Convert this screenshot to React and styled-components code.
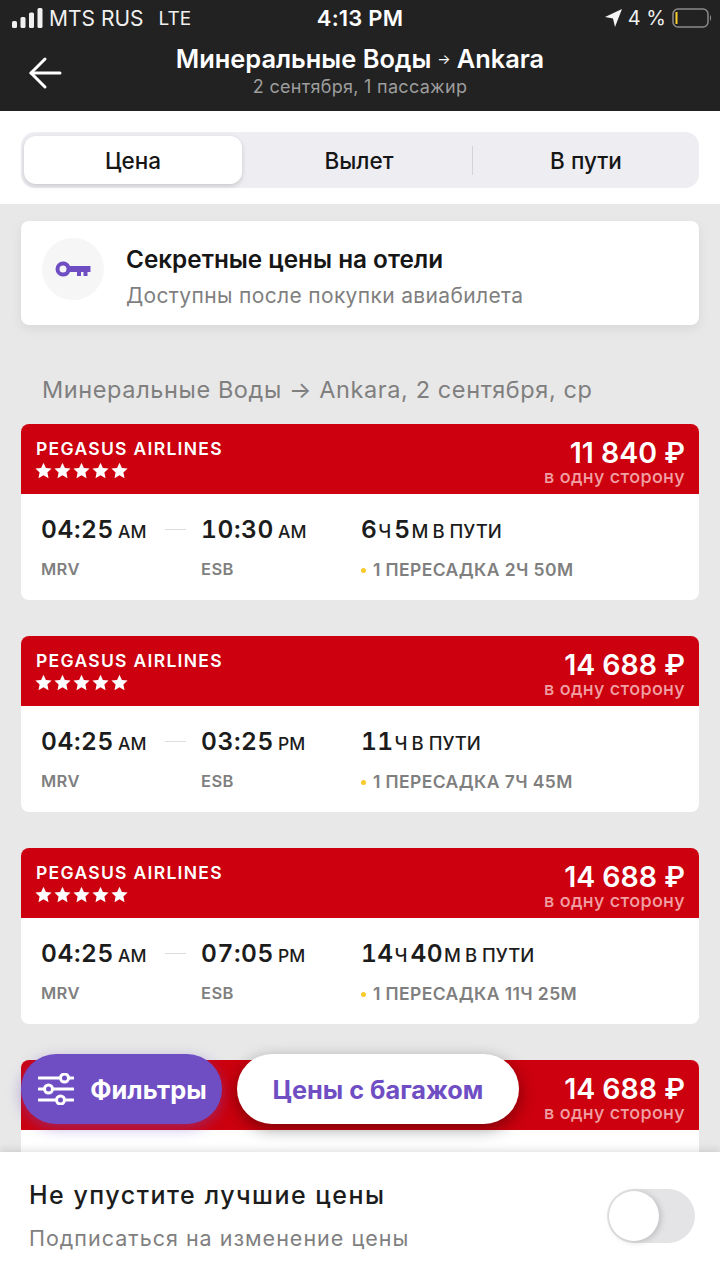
import React from 'react';
import styled, { createGlobalStyle } from 'styled-components';

const Global = createGlobalStyle`
html, body {
  margin: 0;
  padding: 0;
  background: #e8e8e8;
}
* {
  box-sizing: border-box;
}
`;

const Page = styled.div`
position: relative;
width: 720px;
height: 1280px;
overflow: hidden;
background: #e8e8e8;
font-family: Inter, "Noto Sans", sans-serif;
`;

const Top = styled.header`
height: 111px;
background: #222222;
color: #fff;
`;

const StatusBar = styled.div`
display: grid;
grid-template-columns: 1fr auto 1fr;
align-items: center;
height: 38px;
padding: 0 8px 2px 12px;
`;

const StatusLeft = styled.div`
display: flex;
align-items: center;
font-size: 21px;
color: #f0f0f0;
`;

const Carrier = styled.span`
margin-left: 6px;
`;

const Lte = styled.span`
margin-left: 15px;
font-size: 19px;
`;

const Clock = styled.div`
margin-right: 4px;
font-size: 22px;
font-weight: 600;
letter-spacing: 0.2px;
`;

const StatusRight = styled.div`
display: flex;
align-items: center;
justify-content: flex-end;
gap: 6px;
font-size: 20px;
color: #f0f0f0;
`;

const NavRow = styled.div`
position: relative;
display: flex;
flex-direction: column;
align-items: center;
padding-top: 5px;
`;

const BackButton = styled.div`
position: absolute;
left: 28px;
top: 18px;
line-height: 0;
`;

const NavTitle = styled.div`
display: flex;
align-items: center;
gap: 6px;
font-size: 25.4px;
font-weight: 600;
line-height: 32px;
`;

const SmallArrow = styled.span`
font-size: 14px;
font-weight: 400;
`;

const NavSub = styled.div`
font-size: 18px;
line-height: 24px;
color: #9d9d9d;
letter-spacing: 0.3px;
`;

const TabsBlock = styled.div`
height: 93px;
padding: 21px 21px 0;
background: #fff;
`;

const Tabs = styled.div`
position: relative;
display: grid;
grid-template-columns: 218px 234px 1fr;
align-items: center;
height: 56px;
padding: 4px 3px;
border-radius: 14px;
background: #eeeef2;
`;

const Tab = styled.div`
display: flex;
align-items: center;
justify-content: center;
height: 48px;
border-radius: 12px;
font-size: 22.5px;
font-weight: 500;
color: #161616;
background: ${p => (p.$active ? '#fff' : 'transparent')};
box-shadow: ${p => (p.$active ? '0 2px 5px rgba(0,0,0,.16)' : 'none')};
`;

const TabDivider = styled.div`
position: absolute;
left: 451px;
top: 14px;
width: 1px;
height: 29px;
background: #d4d4d8;
`;

const Content = styled.main`
padding: 17px 21px 0;
`;

const Promo = styled.div`
display: flex;
align-items: center;
gap: 22px;
height: 104px;
padding: 0 21px;
border-radius: 8px;
background: #fff;
box-shadow: 0 4px 12px rgba(0,0,0,.07);
`;

const KeyCircle = styled.div`
display: flex;
align-items: center;
justify-content: center;
width: 62px;
height: 62px;
margin-bottom: 8px;
border-radius: 50%;
background: #f6f6f6;
`;

const PromoText = styled.div`
margin-top: 6px;
`;

const PromoTitle = styled.div`
font-size: 24.3px;
font-weight: 600;
line-height: 30px;
color: #161616;
`;

const PromoSub = styled.div`
margin-top: 9px;
font-size: 21px;
line-height: 26px;
color: #7f7f7f;
letter-spacing: 0.35px;
`;

const SectionTitle = styled.h2`
margin: 50px 0 19px 21px;
font-size: 23.5px;
font-weight: 400;
line-height: 30px;
color: #7f7f7f;
letter-spacing: 0.6px;
`;

const FlightList = styled.div`
display: flex;
flex-direction: column;
gap: 36px;
`;

const Card = styled.article`
height: 176px;
border-radius: 8px;
overflow: hidden;
background: #fff;
`;

const CardHead = styled.div`
display: flex;
justify-content: space-between;
height: 70px;
padding: 14px 14px 0 15px;
background: #cc000e;
color: #fff;
`;

const Airline = styled.div`
font-size: 17.5px;
font-weight: 600;
line-height: 22px;
letter-spacing: 1.3px;
`;

const Stars = styled.div`
display: flex;
gap: 2px;
margin-top: 2px;
margin-left: -1px;
`;

const PriceCol = styled.div`
display: flex;
flex-direction: column;
align-items: flex-end;
`;

const Price = styled.div`
margin-top: 1px;
font-size: 28.5px;
font-weight: 600;
line-height: 28px;
`;

const PriceNote = styled.div`
margin-top: -1px;
font-size: 18px;
font-weight: 500;
line-height: 22px;
letter-spacing: 0.35px;
color: #f1a0a5;
`;

const CardBody = styled.div`
display: grid;
grid-template-columns: 160px 160px 1fr;
grid-template-rows: 40px 30px;
row-gap: 5px;
padding: 16px 20px 0;
`;

const TimeCell = styled.div`
position: relative;
display: flex;
align-items: baseline;
gap: 4px;
padding-top: 4px;
font-size: 24.5px;
font-weight: 600;
font-variant-numeric: tabular-nums;
letter-spacing: 0.6px;
color: #1c1c1c;
`;

const Unit = styled.span`
font-size: 17.5px;
font-weight: 500;
letter-spacing: 0;
`;

const Dash = styled.div`
position: absolute;
left: 124px;
top: 19px;
width: 21px;
height: 1px;
background: #dddddd;
`;

const Duration = styled.div`
display: flex;
align-items: baseline;
padding-top: 4px;
font-size: 24.5px;
font-weight: 600;
font-variant-numeric: tabular-nums;
letter-spacing: 0.4px;
color: #1c1c1c;
`;

const DurUnit = styled.span`
margin: 0 3px 0 1px;
font-size: 18.5px;
font-weight: 500;
letter-spacing: 0;
`;

const Code = styled.div`
font-size: 16.5px;
font-weight: 600;
line-height: 28px;
letter-spacing: 0.4px;
color: #7f7f7f;
`;

const Stops = styled(Code)`
display: flex;
align-items: center;
gap: 7px;
font-size: 17.5px;
`;

const Dot = styled.span`
width: 5px;
height: 5px;
border-radius: 50%;
background: #f8ca2c;
`;

const Pill = styled.div`
position: absolute;
top: 1054px;
display: flex;
align-items: center;
justify-content: center;
height: 70px;
border-radius: 35px;
font-weight: 700;
`;

const FilterPill = styled(Pill)`
left: 21px;
width: 201px;
gap: 16px;
padding-left: 2px;
font-size: 25.4px;
background: #6f4ec4;
color: #fff;
box-shadow: 0 4px 14px rgba(111,78,196,.45);
`;

const BaggagePill = styled(Pill)`
left: 237px;
width: 282px;
font-size: 25.3px;
background: #fff;
color: #6f4ec4;
box-shadow: 0 5px 16px rgba(0,0,0,.4);
`;

const Bottom = styled.section`
position: absolute;
left: 0;
right: 0;
bottom: 0;
display: flex;
align-items: center;
justify-content: space-between;
height: 128px;
padding: 0 25px 0 29px;
background: #fff;
box-shadow: 0 -2px 8px rgba(0,0,0,.12);
`;

const BottomTitle = styled.div`
margin-top: -1px;
font-size: 25px;
font-weight: 500;
line-height: 30px;
letter-spacing: 1.5px;
color: #1c1c1c;
`;

const BottomSub = styled.div`
margin-top: 14px;
font-size: 21.5px;
line-height: 28px;
letter-spacing: 1px;
color: #7f7f7f;
`;

const Switch = styled.div`
display: flex;
width: 88px;
height: 54px;
padding: 2px;
border-radius: 27px;
background: #e4e4e7;
`;

const Knob = styled.div`
width: 50px;
height: 50px;
border-radius: 50%;
background: #fff;
box-shadow: 2px 1px 6px rgba(0,0,0,.18);
`;

const Signal = () => (
  <svg width="31" height="20" viewBox="0 0 31 20" fill="#f0f0f0">
    <rect x="0" y="13" width="5" height="7" rx="1.5" />
    <rect x="8.5" y="9" width="5" height="11" rx="1.5" />
    <rect x="17" y="4.5" width="5" height="15.5" rx="1.5" />
    <rect x="25.5" y="0" width="5" height="20" rx="1.5" />
  </svg>
);

const Locate = () => (
  <svg width="17" height="18" viewBox="0 0 17 18" fill="#f4f4f4">
    <path d="M17 0 L0 8 L8 9.5 L10 18 Z" />
  </svg>
);

const Battery = () => (
  <svg width="40" height="20" viewBox="0 0 40 20" fill="none">
    <rect x="1" y="1" width="35" height="18" rx="5" stroke="#8a8a8a" strokeWidth="1.5" />
    <rect x="3.5" y="4" width="2" height="12" fill="#f7d02c" />
    <path d="M38 7 C39.5 8 39.5 12 38 13 Z" fill="#8a8a8a" />
  </svg>
);

const BackArrow = () => (
  <svg width="34" height="34" viewBox="0 0 34 34" fill="none" stroke="#fff" strokeWidth="3" strokeLinecap="round" strokeLinejoin="round">
    <path d="M32 17 H3" />
    <path d="M17 3 L3 17 L17 31" />
  </svg>
);

const KeyIcon = () => (
  <svg width="36" height="16" viewBox="0 0 36 16" fill="#6f4ec4">
    <path fillRule="evenodd" d="M8 0.5 a7.5 7.5 0 1 0 0 15 a7.5 7.5 0 0 0 7-4.5 H22 V15 H26 V11 H28.5 V15 H32.5 V11 H35.5 V5 H15 A7.5 7.5 0 0 0 8 0.5 Z M8 4.5 a3.5 3.5 0 1 1 0 7 a3.5 3.5 0 0 1 0-7 Z" />
  </svg>
);

const Star = () => (
  <svg width="17" height="17" viewBox="0 0 24 24" fill="#fff">
    <path d="M12 1 L15.4 8.3 L23.4 9.3 L17.5 14.8 L19.1 22.8 L12 18.8 L4.9 22.8 L6.5 14.8 L.6 9.3 L8.6 8.3 Z" />
  </svg>
);

const Sliders = () => (
  <svg width="36" height="32" viewBox="0 0 36 32" fill="none" stroke="#fff" strokeWidth="3" strokeLinecap="round">
    <path d="M1 5 H22 M31 5 H35" />
    <circle cx="26.5" cy="5" r="4" />
    <path d="M1 16 H6 M15 16 H35" />
    <circle cx="10.5" cy="16" r="4" />
    <path d="M1 27 H18 M27 27 H35" />
    <circle cx="22.5" cy="27" r="4" />
  </svg>
);

// the last card runs under the bottom panel, only its head shows
const flights = [
  { price: '11 840 ₽', arrive: '10:30', arriveUnit: 'AM', hours: '6', mins: '5', stop: '1 ПЕРЕСАДКА 2Ч 50М' },
  { price: '14 688 ₽', arrive: '03:25', arriveUnit: 'PM', hours: '11', stop: '1 ПЕРЕСАДКА 7Ч 45М' },
  { price: '14 688 ₽', arrive: '07:05', arriveUnit: 'PM', hours: '14', mins: '40', stop: '1 ПЕРЕСАДКА 11Ч 25М' },
  { price: '14 688 ₽' },
];

const FlightCard = ({ flight }) => (
  <Card>
    <CardHead>
      <div>
        <Airline>PEGASUS AIRLINES</Airline>
        <Stars>
          {[0, 1, 2, 3, 4].map(i => <Star key={i} />)}
        </Stars>
      </div>
      <PriceCol>
        <Price>{flight.price}</Price>
        <PriceNote>в одну сторону</PriceNote>
      </PriceCol>
    </CardHead>
    {flight.arrive && (
      <CardBody>
        <TimeCell>04:25 <Unit>AM</Unit><Dash /></TimeCell>
        <TimeCell>{flight.arrive} <Unit>{flight.arriveUnit}</Unit></TimeCell>
        <Duration>
          {flight.hours}<DurUnit>Ч</DurUnit>
          {flight.mins && <>{flight.mins}<DurUnit>М</DurUnit></>}
          <DurUnit>В ПУТИ</DurUnit>
        </Duration>
        <Code>MRV</Code>
        <Code>ESB</Code>
        <Stops><Dot />{flight.stop}</Stops>
      </CardBody>
    )}
  </Card>
);

export default function App() {
  return (
    <Page>
      <Global />
      <Top>
        <StatusBar>
          <StatusLeft>
            <Signal />
            <Carrier>MTS RUS</Carrier>
            <Lte>LTE</Lte>
          </StatusLeft>
          <Clock>4:13 PM</Clock>
          <StatusRight>
            <Locate />
            <span>4 %</span>
            <Battery />
          </StatusRight>
        </StatusBar>
        <NavRow>
          <BackButton><BackArrow /></BackButton>
          <NavTitle>Минеральные Воды <SmallArrow>→</SmallArrow> Ankara</NavTitle>
          <NavSub>2 сентября, 1 пассажир</NavSub>
        </NavRow>
      </Top>
      <TabsBlock>
        <Tabs>
          <Tab $active>Цена</Tab>
          <Tab>Вылет</Tab>
          <Tab>В пути</Tab>
          <TabDivider />
        </Tabs>
      </TabsBlock>
      <Content>
        <Promo>
          <KeyCircle><KeyIcon /></KeyCircle>
          <PromoText>
            <PromoTitle>Секретные цены на отели</PromoTitle>
            <PromoSub>Доступны после покупки авиабилета</PromoSub>
          </PromoText>
        </Promo>
        <SectionTitle>Минеральные Воды → Ankara, 2 сентября, ср</SectionTitle>
        <FlightList>
          {flights.map((f, i) => <FlightCard key={i} flight={f} />)}
        </FlightList>
      </Content>
      <FilterPill><Sliders />Фильтры</FilterPill>
      <BaggagePill>Цены с багажом</BaggagePill>
      <Bottom>
        <div>
          <BottomTitle>Не упустите лучшие цены</BottomTitle>
          <BottomSub>Подписаться на изменение цены</BottomSub>
        </div>
        <Switch><Knob /></Switch>
      </Bottom>
    </Page>
  );
}
